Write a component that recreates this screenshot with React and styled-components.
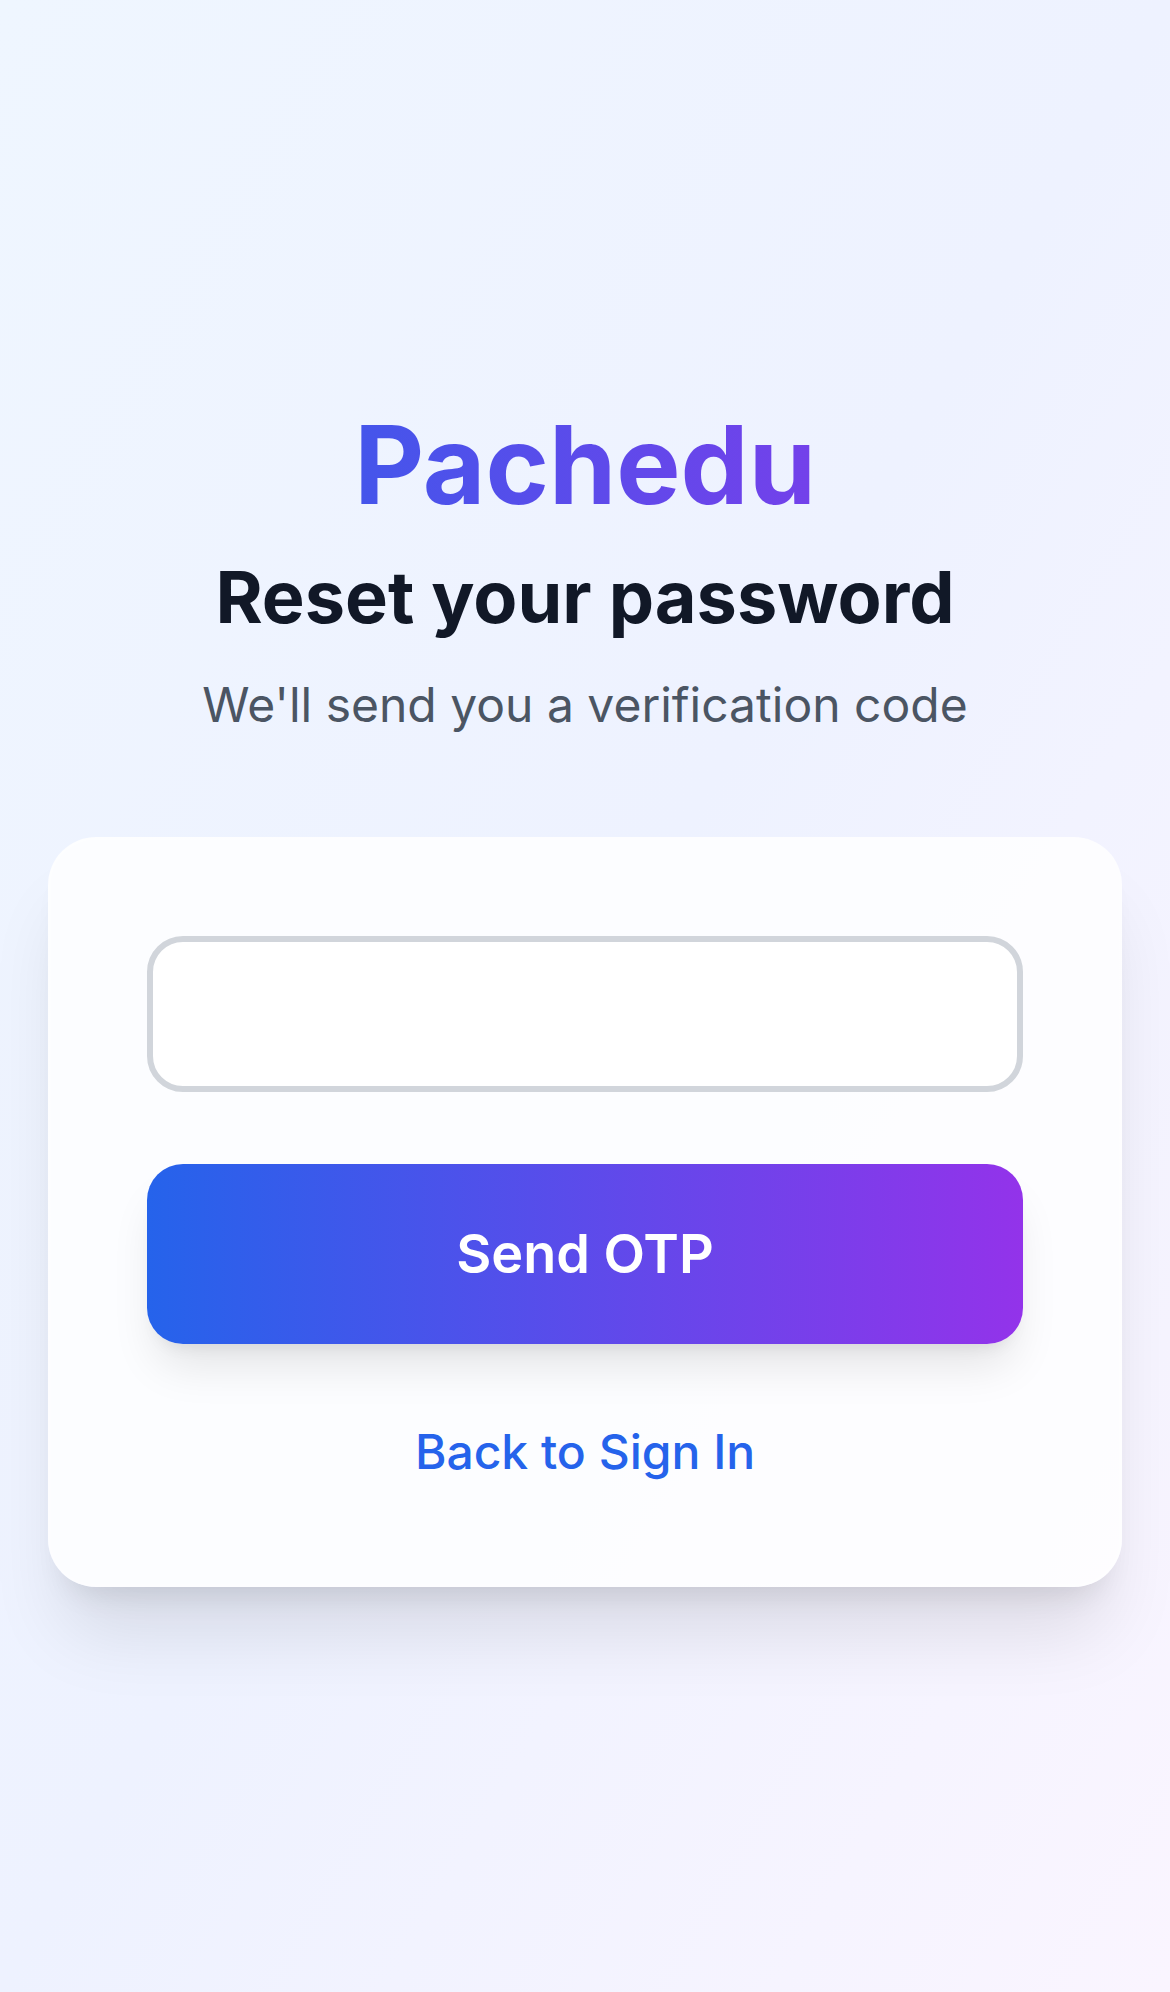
import React from "react";
import styled, { createGlobalStyle } from "styled-components";

const GlobalStyle = createGlobalStyle`
  * {
    box-sizing: border-box;
  }

  body {
    margin: 0;
    font-family: "Inter", "Noto Sans", sans-serif;
  }
`;

const Page = styled.div`
  min-height: 100vh;
  display: flex;
  flex-direction: column;
  justify-content: center;
  padding: 0 48px;
  background: linear-gradient(to bottom right, #eff6ff, #eef2ff 50%, #faf5ff);
`;

const Header = styled.div`
  text-align: center;
  margin-bottom: 96px;
`;

const Brand = styled.h1`
  margin: 0 0 24px;
  font-size: 108px;
  line-height: 120px;
  font-weight: 700;
  background: linear-gradient(to right, #2563eb, #9333ea);
  -webkit-background-clip: text;
  background-clip: text;
  color: transparent;
`;

const Title = styled.h2`
  margin: 0;
  font-size: 72px;
  line-height: 96px;
  font-weight: 700;
  color: #111827;
`;

const Subtitle = styled.p`
  margin: 24px 0 0;
  font-size: 48px;
  line-height: 72px;
  color: #4b5563;
`;

const Card = styled.div`
  display: flex;
  flex-direction: column;
  padding: 96px;
  border: 3px solid rgba(255, 255, 255, 0.2);
  border-radius: 48px;
  background: rgba(255, 255, 255, 0.8);
  box-shadow: 0 60px 75px -15px rgba(0, 0, 0, 0.1),
    0 24px 30px -18px rgba(0, 0, 0, 0.1);
`;

const Input = styled.input`
  display: block;
  width: 100%;
  height: 156px;
  padding: 36px 48px;
  border: 6px solid #d1d5db;
  border-radius: 36px;
  background: #ffffff;
  font-family: inherit;
  font-size: 48px;
  outline: none;
`;

const SubmitButton = styled.button`
  margin-top: 72px;
  width: 100%;
  height: 180px;
  border: none;
  border-radius: 36px;
  background: linear-gradient(to right, #2563eb, #9333ea);
  color: #ffffff;
  font-family: inherit;
  font-size: 54px;
  line-height: 84px;
  font-weight: 600;
  cursor: pointer;
  box-shadow: 0 30px 45px -9px rgba(0, 0, 0, 0.1),
    0 12px 18px -12px rgba(0, 0, 0, 0.1);
`;

const LinkRow = styled.div`
  margin-top: 72px;
  text-align: center;
`;

const BackLink = styled.a`
  font-size: 48px;
  line-height: 72px;
  font-weight: 500;
  color: #2563eb;
  text-decoration: none;
  cursor: pointer;
`;

const App = () => {
  return (
    <>
      <GlobalStyle />
      <Page>
        <Header>
          <Brand>Pachedu</Brand>
          <Title>Reset your password</Title>
          <Subtitle>We'll send you a verification code</Subtitle>
        </Header>

        <Card>
          <Input type="email" aria-label="Email" />
          <SubmitButton type="button">Send OTP</SubmitButton>
          <LinkRow>
            <BackLink>Back to Sign In</BackLink>
          </LinkRow>
        </Card>
      </Page>
    </>
  );
};

export default App;
